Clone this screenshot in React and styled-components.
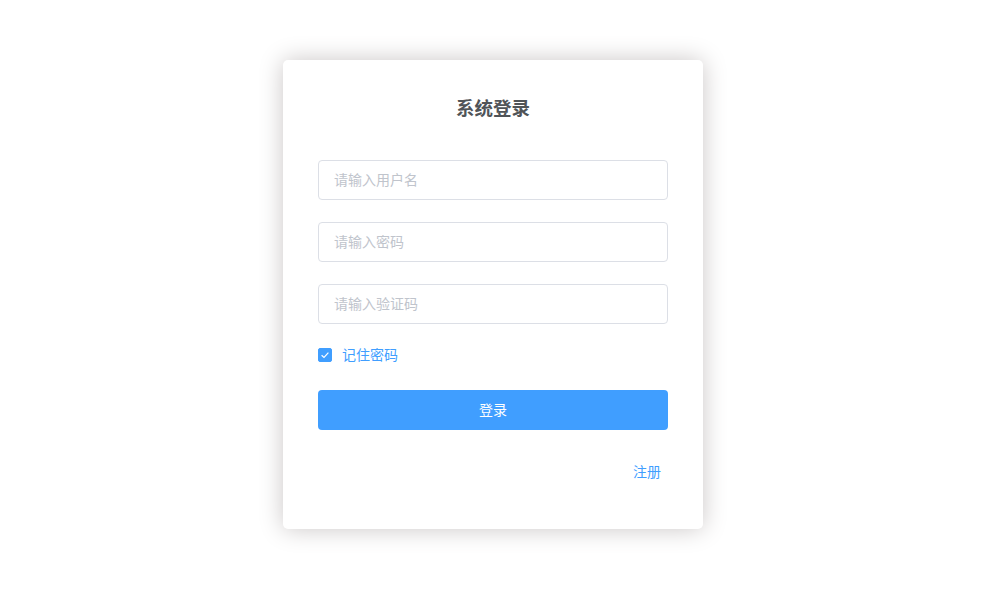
import styled, { createGlobalStyle } from 'styled-components';
import { useState } from 'react';

const GlobalStyle = createGlobalStyle`
  html, body {
    margin: 0;
    padding: 0;
    background: #fff;
    font-family: "Noto Sans CJK SC", "Noto Sans", sans-serif;
  }
`

const Page = styled.div`
  width: 100%;
  height: 600px;
  display: flex;
  justify-content: center;
  align-items: flex-start;
  padding: 60px 14px 0 0;
  box-sizing: border-box;
`

const Card = styled.form`
  width: 420px;
  box-sizing: border-box;
  padding: 35px 35px 35px;
  background: #fff;
  border-radius: 5px;
  box-shadow: 0 0 25px #cac6c6;
  display: flex;
  flex-direction: column;
`

const Title = styled.h3`
  margin: 0 0 40px;
  font-size: 18.5px;
  line-height: 25px;
  font-weight: 700;
  color: #505458;
  text-align: center;
`

const Input = styled.input`
  display: block;
  width: 100%;
  height: 40px;
  box-sizing: border-box;
  margin: 0 0 22px;
  padding: 0 15px 2px;
  border: 1px solid #dcdfe6;
  border-radius: 4px;
  font-family: inherit;
  font-size: 14px;
  color: #606266;
  outline: none;

  &::placeholder {
    color: #c0c4cc;
  }
`

const CheckRow = styled.label`
  display: flex;
  align-items: center;
  gap: 10px;
  height: 18px;
  margin-bottom: 26px;
  font-size: 14px;
  color: #409eff;
  cursor: pointer;

  span:last-child {
    margin-top: -2px;
  }
`

const Box = styled.span`
  width: 14px;
  height: 14px;
  box-sizing: border-box;
  border-radius: 2px;
  border: 1px solid ${p => (p.checked ? '#409eff' : '#dcdfe6')};
  background: ${p => (p.checked ? '#409eff' : '#fff')};
  display: flex;
  align-items: center;
  justify-content: center;
`

const Button = styled.button`
  width: 100%;
  height: 40px;
  padding: 0 0 2px;
  border: none;
  border-radius: 4px;
  background: #409eff;
  color: #fff;
  font-family: inherit;
  font-size: 14px;
  cursor: pointer;
`

const Footer = styled.div`
  display: flex;
  justify-content: flex-end;
  margin: 31px 0 13px;
  padding-right: 7px;
`

const Link = styled.a`
  font-size: 14px;
  line-height: 20px;
  color: #409eff;
  text-decoration: none;
`

export default function App() {
  const [remember, setRemember] = useState(true)

  return <>
    <GlobalStyle />
    <Page>
      <Card onSubmit={e => e.preventDefault()}>
        <Title>系统登录</Title>
        <Input type="text" placeholder="请输入用户名" />
        <Input type="password" placeholder="请输入密码" />
        <Input type="text" placeholder="请输入验证码" />
        <CheckRow onClick={() => setRemember(!remember)}>
          <Box checked={remember}>
            {remember && (
              <svg width="12" height="12" viewBox="0 0 12 12">
                <path d="M2.6 6.2 L5 8.4 L9.4 3.6" fill="none" stroke="#fff" strokeWidth="1.2" />
              </svg>
            )}
          </Box>
          <span>记住密码</span>
        </CheckRow>
        <Button type="submit">登录</Button>
        <Footer>
          <Link href="#register">注册</Link>
        </Footer>
      </Card>
    </Page>
  </>
}
